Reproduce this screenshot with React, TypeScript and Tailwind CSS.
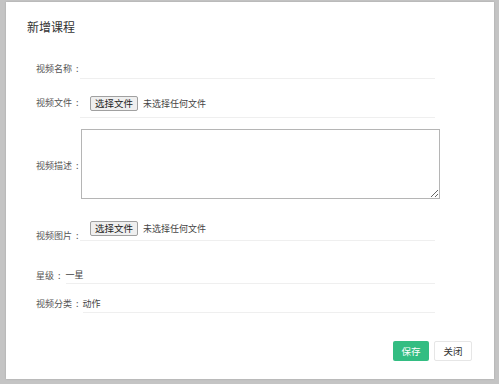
import React from "react";

const font = { fontFamily: '"Noto Sans CJK SC", "Noto Sans", sans-serif' };

function Label({ text, className = "" }: { text: string; className?: string }) {
  return (
    <span className={`w-[44px] flex text-[9px] leading-[14px] text-[#555] whitespace-nowrap ${className}`}>
      {text}
      <span className="ml-[4px]">:</span>
    </span>
  );
}

function FileButton() {
  return (
    <div className="flex items-center">
      <button className="h-[15px] px-[4px] bg-[#efefef] border border-[#a0a0a0] rounded-[2px] text-[9.5px] leading-[13px] text-[#222]">
        选择文件
      </button>
      <span className="ml-[5px] text-[9px] leading-[14px] text-[#444]">未选择任何文件</span>
    </div>
  );
}

export default function App() {
  return (
    <div
      className="w-[499px] h-[384px] bg-[#c4c4c4] pt-[2px] pl-[6px] pr-[5px] pb-[5px]"
      style={font}
    >
      <div className="h-full bg-white flex flex-col shadow-[0_0_2px_rgba(0,0,0,0.15)]">
        <h1 className="mt-[18px] ml-[21px] text-[12px] leading-[14px] text-[#333] font-normal">
          新增课程
        </h1>

        {/* 视频名称 */}
        <div className="mt-[25px] ml-[30px] flex items-center">
          <Label text="视频名称" />
          <div className="w-[355px] h-[20px] border-b border-[#efefef]" />
        </div>

        {/* 视频文件 */}
        <div className="mt-[13px] ml-[30px] flex items-start">
          <Label text="视频文件" className="mt-[4px]" />
          <div className="w-[355px] h-[26px] border-b border-[#efefef] pl-[10px] pt-[4px]">
            <FileButton />
          </div>
        </div>

        {/* 视频描述 */}
        <div className="mt-[11px] ml-[30px] flex items-start">
          <Label text="视频描述" className="mt-[30px]" />
          <textarea className="ml-[1px] w-[359px] h-[70px] border border-[#b5b5b5] outline-none resize-y" />
        </div>

        {/* 视频图片 */}
        <div className="mt-[16px] ml-[30px] flex items-start">
          <Label text="视频图片" className="mt-[14px]" />
          <div className="w-[355px] h-[26px] border-b border-[#efefef] pl-[10px] pt-[6px]">
            <FileButton />
          </div>
        </div>

        {/* 星级 */}
        <div className="mt-[25px] ml-[30px] flex items-center w-[399px]">
          <span className="text-[9px] leading-[14px] text-[#555] whitespace-nowrap">
            星级<span className="ml-[4px] mr-[5px]">:</span>
          </span>
          <div className="flex-1 h-[16px] border-b border-[#efefef] text-[9px] leading-[14px] text-[#444]">一星</div>
        </div>

        {/* 视频分类 */}
        <div className="mt-[11px] ml-[30px] flex items-center w-[399px]">
          <span className="text-[9px] leading-[14px] text-[#555] whitespace-nowrap">
            视频分类<span className="ml-[4px] mr-[4px]">:</span>
          </span>
          <div className="flex-1 h-[18px] pt-[2px] border-b border-[#efefef] text-[9px] leading-[14px] text-[#444]">动作</div>
        </div>

        <div className="mt-auto mb-[18px] mr-[22px] flex justify-end gap-[5px]">
          <button className="w-[36px] h-[20px] bg-[#33bd82] rounded-[2px] text-white text-[9.5px] leading-[20px]">
            保存
          </button>
          <button className="w-[38px] h-[20px] bg-white border border-[#e6e6e6] rounded-[2px] text-[#333] text-[9.5px] leading-[18px]">
            关闭
          </button>
        </div>
      </div>
    </div>
  );
}
